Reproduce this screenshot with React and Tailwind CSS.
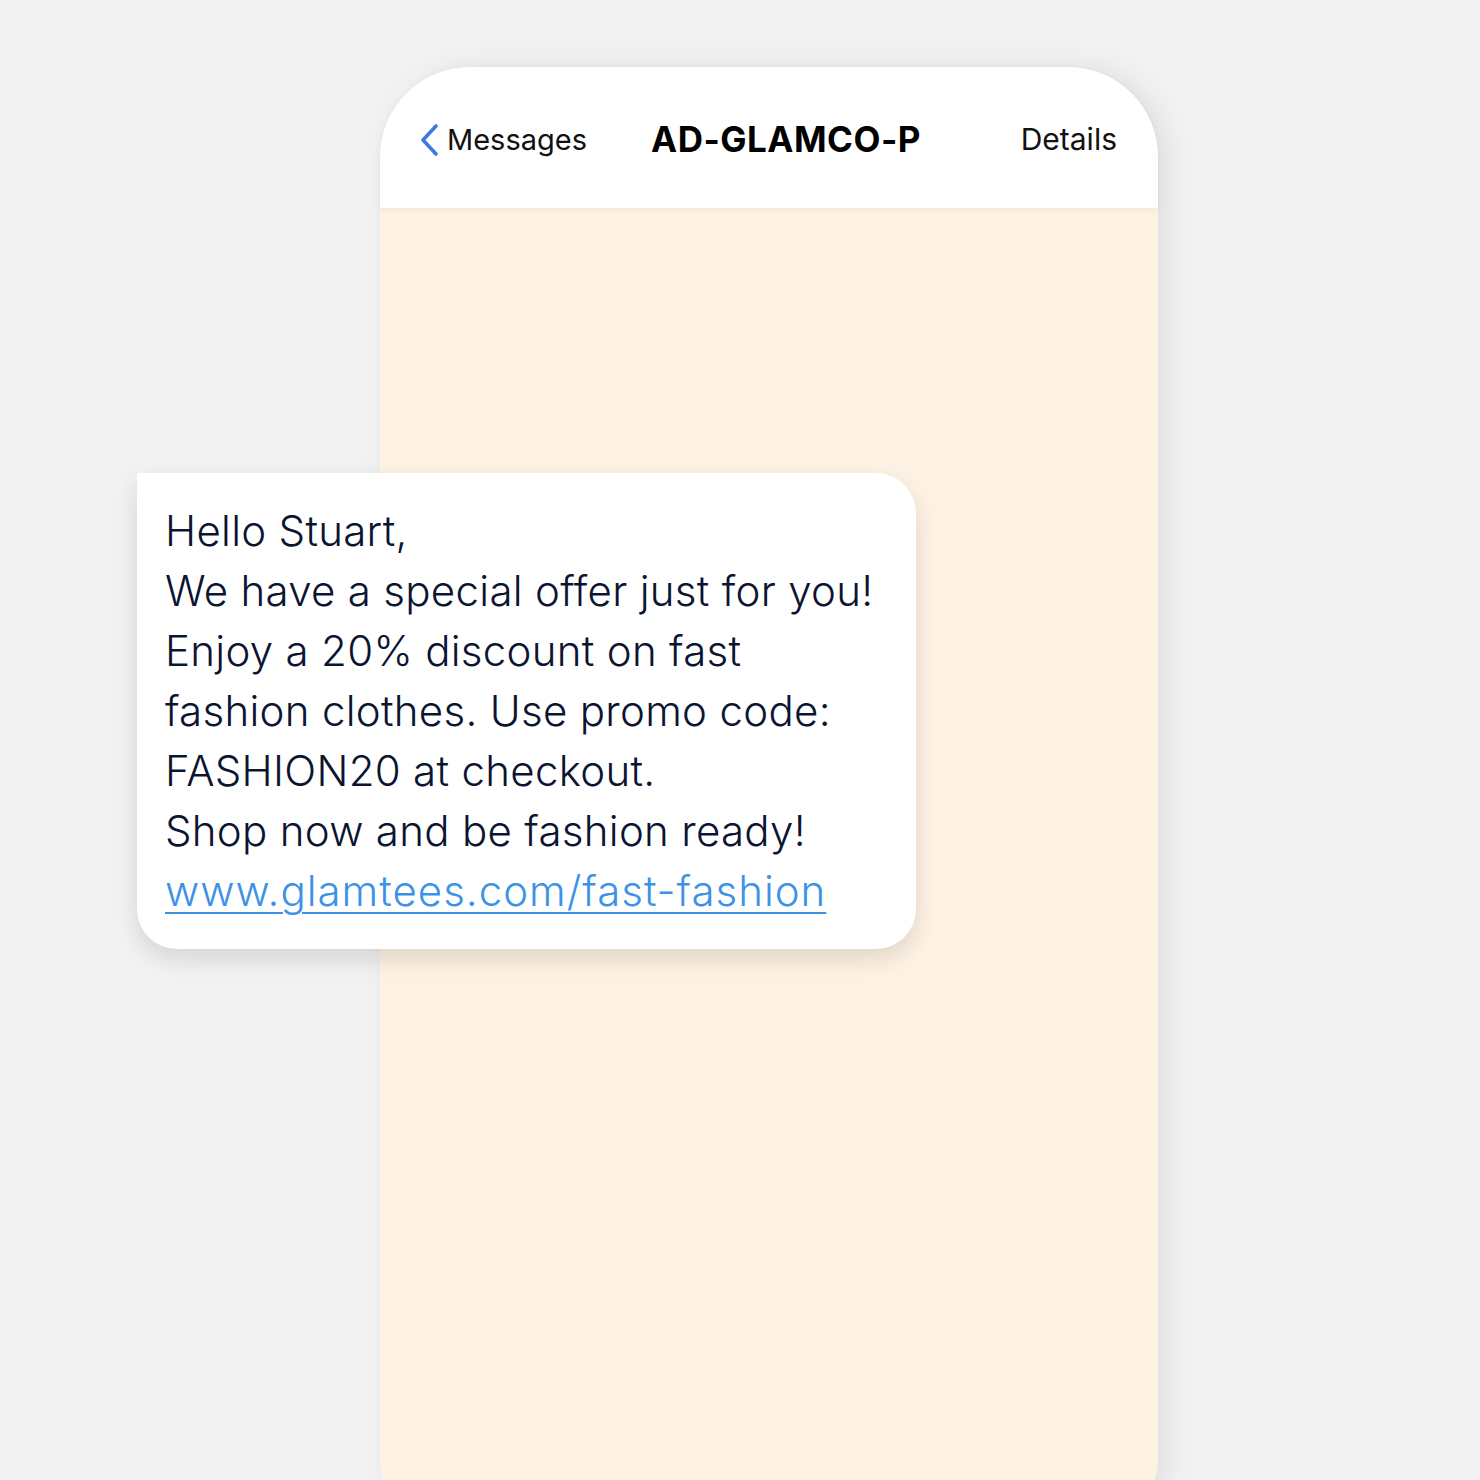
import React from "react";

const lines = [
	"Hello Stuart,",
	"We have a special offer just for you!",
	"Enjoy a 20% discount on fast",
	"fashion clothes. Use promo code:",
	"FASHION20 at checkout.",
	"Shop now and be fashion ready!",
];

const Header = () => (
	<div className="relative z-10 flex h-[141px] items-center rounded-t-[90px] bg-white pl-[39px] pr-[41px] pt-[4px] shadow-[0_2px_6px_rgba(0,0,0,0.06)]">
		<div className="flex items-center gap-[8px]">
			<svg width="20" height="34" viewBox="0 0 20 34" fill="none">
				<path d="M17 3 L4 17 L17 31" stroke="#3a7be6" strokeWidth="3.6" strokeLinecap="round" strokeLinejoin="round" />
			</svg>
			<span className="text-[29px] text-[#111]">Messages</span>
		</div>
		<h1 className="ml-[64px] text-[35px] font-bold tracking-[0.5px] text-black">AD-GLAMCO-P</h1>
		<span className="ml-auto text-[30px] text-[#111]">Details</span>
	</div>
);

const Bubble = () => (
	<div className="ml-[-243px] mt-[265px] w-[779px] rounded-[40px] rounded-tl-none bg-white px-7 pb-[28px] pt-[28px] shadow-[0_10px_24px_rgba(0,0,0,0.12)]">
		<div className="text-[42px] font-[350] leading-[60px] tracking-[0.3px] text-[#0b1431]">
			{lines.map((line) => (
				<p key={line}>{line}</p>
			))}
			<a href="#" className="tracking-[1px] text-[#3d92e6] underline decoration-[2px] underline-offset-[6px]">
				www.glamtees.com/fast-fashion
			</a>
		</div>
	</div>
);

export default function App() {
	return (
		<div className="h-[1480px] overflow-hidden bg-[#f2f2f2] pt-[67px]" style={{ fontFamily: "Inter, 'Noto Sans', sans-serif" }}>
			<div className="ml-[380px] flex h-[1436px] w-[778px] flex-col rounded-t-[90px] rounded-b-[40px] bg-[#fdf2e3] shadow-[10px_0_30px_rgba(0,0,0,0.08)]">
				<Header />
				<Bubble />
			</div>
		</div>
	);
}
